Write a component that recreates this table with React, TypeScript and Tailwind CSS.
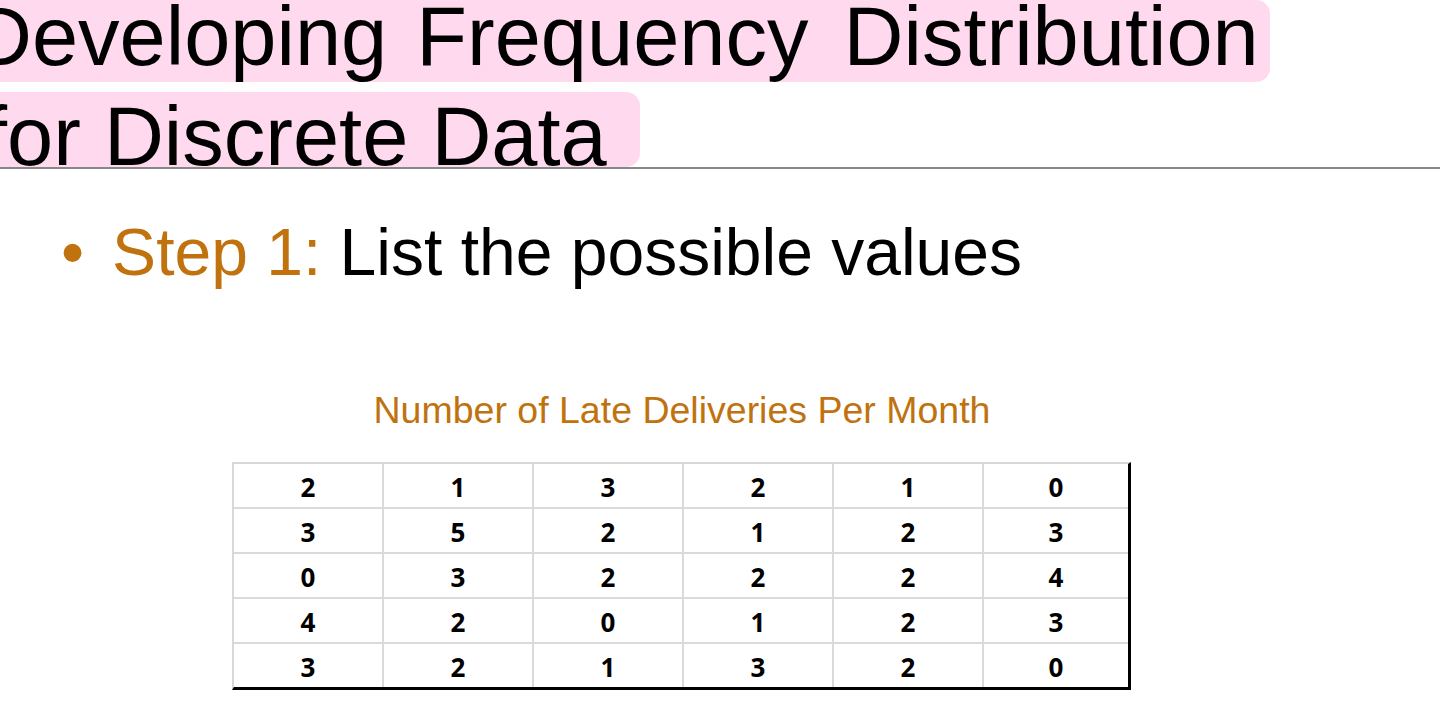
const rows = [
  [2, 1, 3, 2, 1, 0],
  [3, 5, 2, 1, 2, 3],
  [0, 3, 2, 2, 2, 4],
  [4, 2, 0, 1, 2, 3],
  [3, 2, 1, 3, 2, 0],
];

const App = () => {
  return (
    <div className="w-full h-[705px] overflow-hidden bg-white text-black font-['Liberation_Sans',Arial,sans-serif]">
      {/* title with highlighter marks */}
      <div className="flex flex-col items-start">
        <div className="bg-[#ffd9ee] rounded-r-[14px] pr-[11px] pb-[8px]">
          <div className="-ml-[28px] text-[83px] leading-[74px] whitespace-nowrap">
            <span>Developing</span> <span className="ml-[6px]">Frequency</span>{" "}
            <span className="ml-[12px]">Distribution</span>
          </div>
        </div>
        <div className="mt-[10px] bg-[#ffd9ee] rounded-r-[14px] pr-[33px] pt-[15px]">
          <div className="-ml-[16px] text-[83px] leading-[60px] whitespace-nowrap">
            for Discrete Data
          </div>
        </div>
      </div>
      <div className="h-[2px] w-full bg-[#888888]" />

      {/* bullet */}
      <div className="mt-[50px] flex items-baseline text-[66px] leading-[66px] whitespace-nowrap">
        <span className="ml-[61px] text-[#c0720f]">•</span>
        <span className="ml-[28px]">
          <span className="text-[#c0720f]">Step 1:</span> List the possible values
        </span>
      </div>

      {/* data table */}
      <div className="ml-[232px] w-[900px] mt-[107px]">
        <div className="text-center text-[37.5px] leading-[37px] text-[#c0720f] whitespace-nowrap">
          Number of Late Deliveries Per Month
        </div>
        <div className="mt-[33px] inline-block border-l-2 border-t-2 border-r-[3px] border-b-[3px] border-l-[#d8d8d8] border-t-[#d8d8d8] border-r-black border-b-black">
          <div className="grid grid-cols-[148px_148px_148px_148px_148px_144px] auto-rows-[43px] gap-[2px] bg-[#dadada]">
            {rows.flat().map((v, i) => (
              <div
                key={i}
                className="bg-white flex items-center justify-center pt-[3px] font-['Open_Sans',sans-serif] font-bold text-[26px] leading-none"
              >
                {v}
              </div>
            ))}
          </div>
        </div>
      </div>
    </div>
  );
};

export default App;
